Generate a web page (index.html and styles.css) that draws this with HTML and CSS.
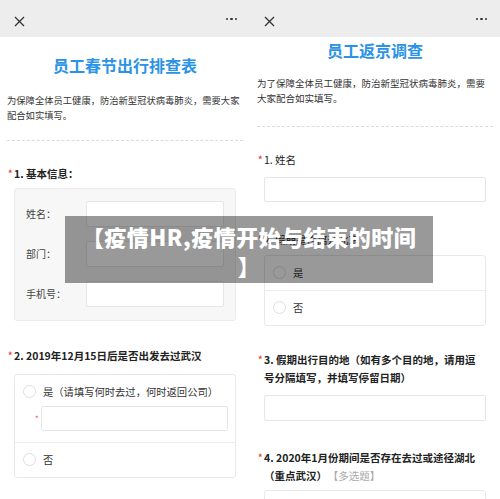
FILE: index.html
```html
<!DOCTYPE html>
<html lang="zh-CN">
<head>
<meta charset="utf-8">
<title>疫情HR</title>
<link rel="stylesheet" href="styles.css">
</head>
<body>
<div class="stage">
  <div class="screen screen-left">
    <div class="topbar">
      <svg class="close" width="11" height="11" viewBox="0 0 11 11"><path d="M1 1L10 10M10 1L1 10" stroke="#333" stroke-width="1.3" fill="none"/></svg>
      <span class="dots"><i></i><i></i><i></i></span>
    </div>
    <div class="content">
      <h1 class="title title-left">员工春节出行排查表</h1>
      <p class="desc desc-left">为保障全体员工健康，防治新型冠状病毒肺炎，需要大家配合如实填写。</p>
      <div class="dash dash-left"></div>
      <div class="question q-l1"><span class="req">*</span><span class="qtext">1. 基本信息：</span></div>
      <div class="info-card">
        <div class="field"><span class="flabel">姓名：</span><span class="input"></span></div>
        <div class="field"><span class="flabel">部门：</span><span class="input"></span></div>
        <div class="field"><span class="flabel">手机号：</span><span class="input"></span></div>
      </div>
      <div class="question q-l2"><span class="req">*</span><span class="qtext">2. 2019年12月15日后是否出发去过武汉</span></div>
      <div class="options">
        <div class="option">
          <div class="opt-row"><span class="radio"></span><span>是（请填写何时去过，何时返回公司）</span></div>
          <div class="sub"><span class="sub-req">*</span><span class="input sub-input"></span></div>
        </div>
        <div class="option">
          <div class="opt-row"><span class="radio"></span><span>否</span></div>
        </div>
      </div>
    </div>
  </div>

  <div class="screen screen-right">
    <div class="topbar">
      <svg class="close" width="11" height="11" viewBox="0 0 11 11"><path d="M1 1L10 10M10 1L1 10" stroke="#333" stroke-width="1.3" fill="none"/></svg>
      <span class="dots"><i></i><i></i><i></i></span>
    </div>
    <div class="content">
      <h1 class="title title-right">员工返京调查</h1>
      <p class="desc desc-right">为了保障全体员工健康，防治新型冠状病毒肺炎，需要大家配合如实填写。</p>
      <div class="dash dash-right"></div>
      <div class="question q-r1"><span class="req">*</span><span class="qtext qtext-light">1. 姓名</span></div>
      <div class="input full-input input-r1"></div>
      <div class="question q-r2"><span class="req">*</span><span class="qtext qtext-light">2. 假期是否离开北京</span></div>
      <div class="options options-r">
        <div class="option">
          <div class="opt-row"><span class="radio"></span><span>是</span></div>
        </div>
        <div class="option">
          <div class="opt-row"><span class="radio"></span><span>否</span></div>
        </div>
      </div>
      <div class="question q-r3"><span class="req">*</span><span class="qtext">3. 假期出行目的地（如有多个目的地，请用逗号分隔填写，并填写停留日期）</span></div>
      <div class="input full-input input-r3"></div>
      <div class="question q-r4"><span class="req">*</span><span class="qtext">4. 2020年1月份期间是否存在去过或途径湖北（重点武汉）<span class="tag">【多选题】</span></span></div>
      <div class="options options-r4">
        <div class="option option-check">
          <span class="check"></span>
        </div>
      </div>
    </div>
  </div>

  <div class="banner">【疫情HR,疫情开始与结束的时间】</div>
</div>
</body>
</html>
```

FILE: styles.css
```css
* { box-sizing: border-box; }
html, body { margin: 0; padding: 0; background: #fff; }
body {
  font-family: "Noto Sans CJK SC", "Noto Sans", "Liberation Sans", sans-serif;
  color: #333;
}
.stage {
  position: relative;
  width: 500px;
  height: 499px;
  overflow: hidden;
  display: grid;
  grid-template-columns: 250px 250px;
}
.screen {
  height: 499px;
  overflow: hidden;
  background: #fff;
}
.topbar {
  height: 37px;
  background: #ededed;
  display: flex;
  align-items: center;
  justify-content: space-between;
  padding: 0 13px 0 14px;
}
.close { display: block; margin-top: 6px; }
.dots { display: flex; gap: 2px; margin-top: 1px; }
.dots i { width: 2.5px; height: 2.5px; border-radius: 50%; background: #333; display: block; }

.content { padding: 0 7px; display: flex; flex-direction: column; }

.title {
  margin: 0;
  font-size: 16px;
  line-height: 20px;
  font-weight: 700;
  color: #2b93e6;
  text-align: center;
}
.title-left { margin-top: 18px; }
.title-right { margin-top: 3px; }

.desc { margin: 0; line-height: 15px; color: #333; }
.desc-left { font-size: 9.3px; margin-top: 17.5px; }
.desc-right { font-size: 9.5px; margin-top: 15.5px; }

.dash { border-top: 1px dashed #dcdcdc; height: 0; }
.dash-left { margin-top: 17px; }
.dash-right { margin-top: 20px; }

.question {
  display: flex;
  font-size: 10.5px;
  line-height: 18px;
  font-weight: 700;
  color: #222;
  padding-right: 8px;
}
.req { width: 7px; flex: none; color: #e43; font-size: 9px; padding-left: 1px; }
.qtext { flex: 1; }
.qtext-light { font-weight: 400; }
.tag { font-weight: 400; color: #aaa; margin-left: 6px; }

.q-l1 { margin-top: 24px; }
.q-l2 { margin-top: 26px; }
.q-r1 { margin-top: 24px; }
.q-r2 { margin-top: 29px; }
.q-r3 { margin-top: 25px; }
.q-r4 { margin-top: 28px; }

.info-card {
  margin: 5px 7px 0;
  background: #f7f7f7;
  border: 1px solid #ebebeb;
  border-radius: 3px;
  padding: 12px 11px 13px 11px;
  display: flex;
  flex-direction: column;
  gap: 14px;
}
.field { display: flex; align-items: center; }
.flabel { width: 60px; font-size: 10px; color: #444; }
.input {
  display: block;
  height: 26px;
  background: #fff;
  border: 1px solid #e6e6e6;
  border-radius: 2px;
  flex: 1;
}

.options {
  margin: 9px 7px 0;
  border: 1px solid #e8e8e8;
  border-radius: 3px;
  background: #fff;
}
.option { padding: 8px 8px; }
.option + .option { border-top: 1px solid #ececec; }
.opt-row {
  display: flex;
  align-items: center;
  gap: 7px;
  font-size: 10.3px;
  line-height: 18px;
  color: #333;
}
.radio {
  width: 13px;
  height: 13px;
  border: 1px solid #dedede;
  border-radius: 50%;
  flex: none;
}
.option-check { padding-top: 10px; height: 30px; }
.check {
  display: block;
  width: 13px;
  height: 13px;
  border: 1px solid #dedede;
  border-radius: 2px;
}
.sub { display: flex; align-items: center; margin-top: 5px; padding-left: 12px; padding-bottom: 3px; }
.sub-req { width: 6px; color: #e43; font-size: 8px; flex: none; }
.sub-input { height: 25px; margin-right: -1px; }

.options-r { margin-top: 6px; }
.options-r4 { margin-top: 5px; }

.full-input { margin: 8px 7px 0; flex: none; height: 26px; }
.input-r1 { height: 25px; }

.banner {
  position: absolute;
  left: 65px;
  top: 216px;
  width: 368px;
  height: 67px;
  background: rgba(0, 0, 0, 0.4);
  color: #fff;
  font-size: 22px;
  line-height: 29px;
  font-weight: 900;
  letter-spacing: 0.5px;
  text-align: center;
  line-break: anywhere;
  padding: 6px 12px 0;
}
```
